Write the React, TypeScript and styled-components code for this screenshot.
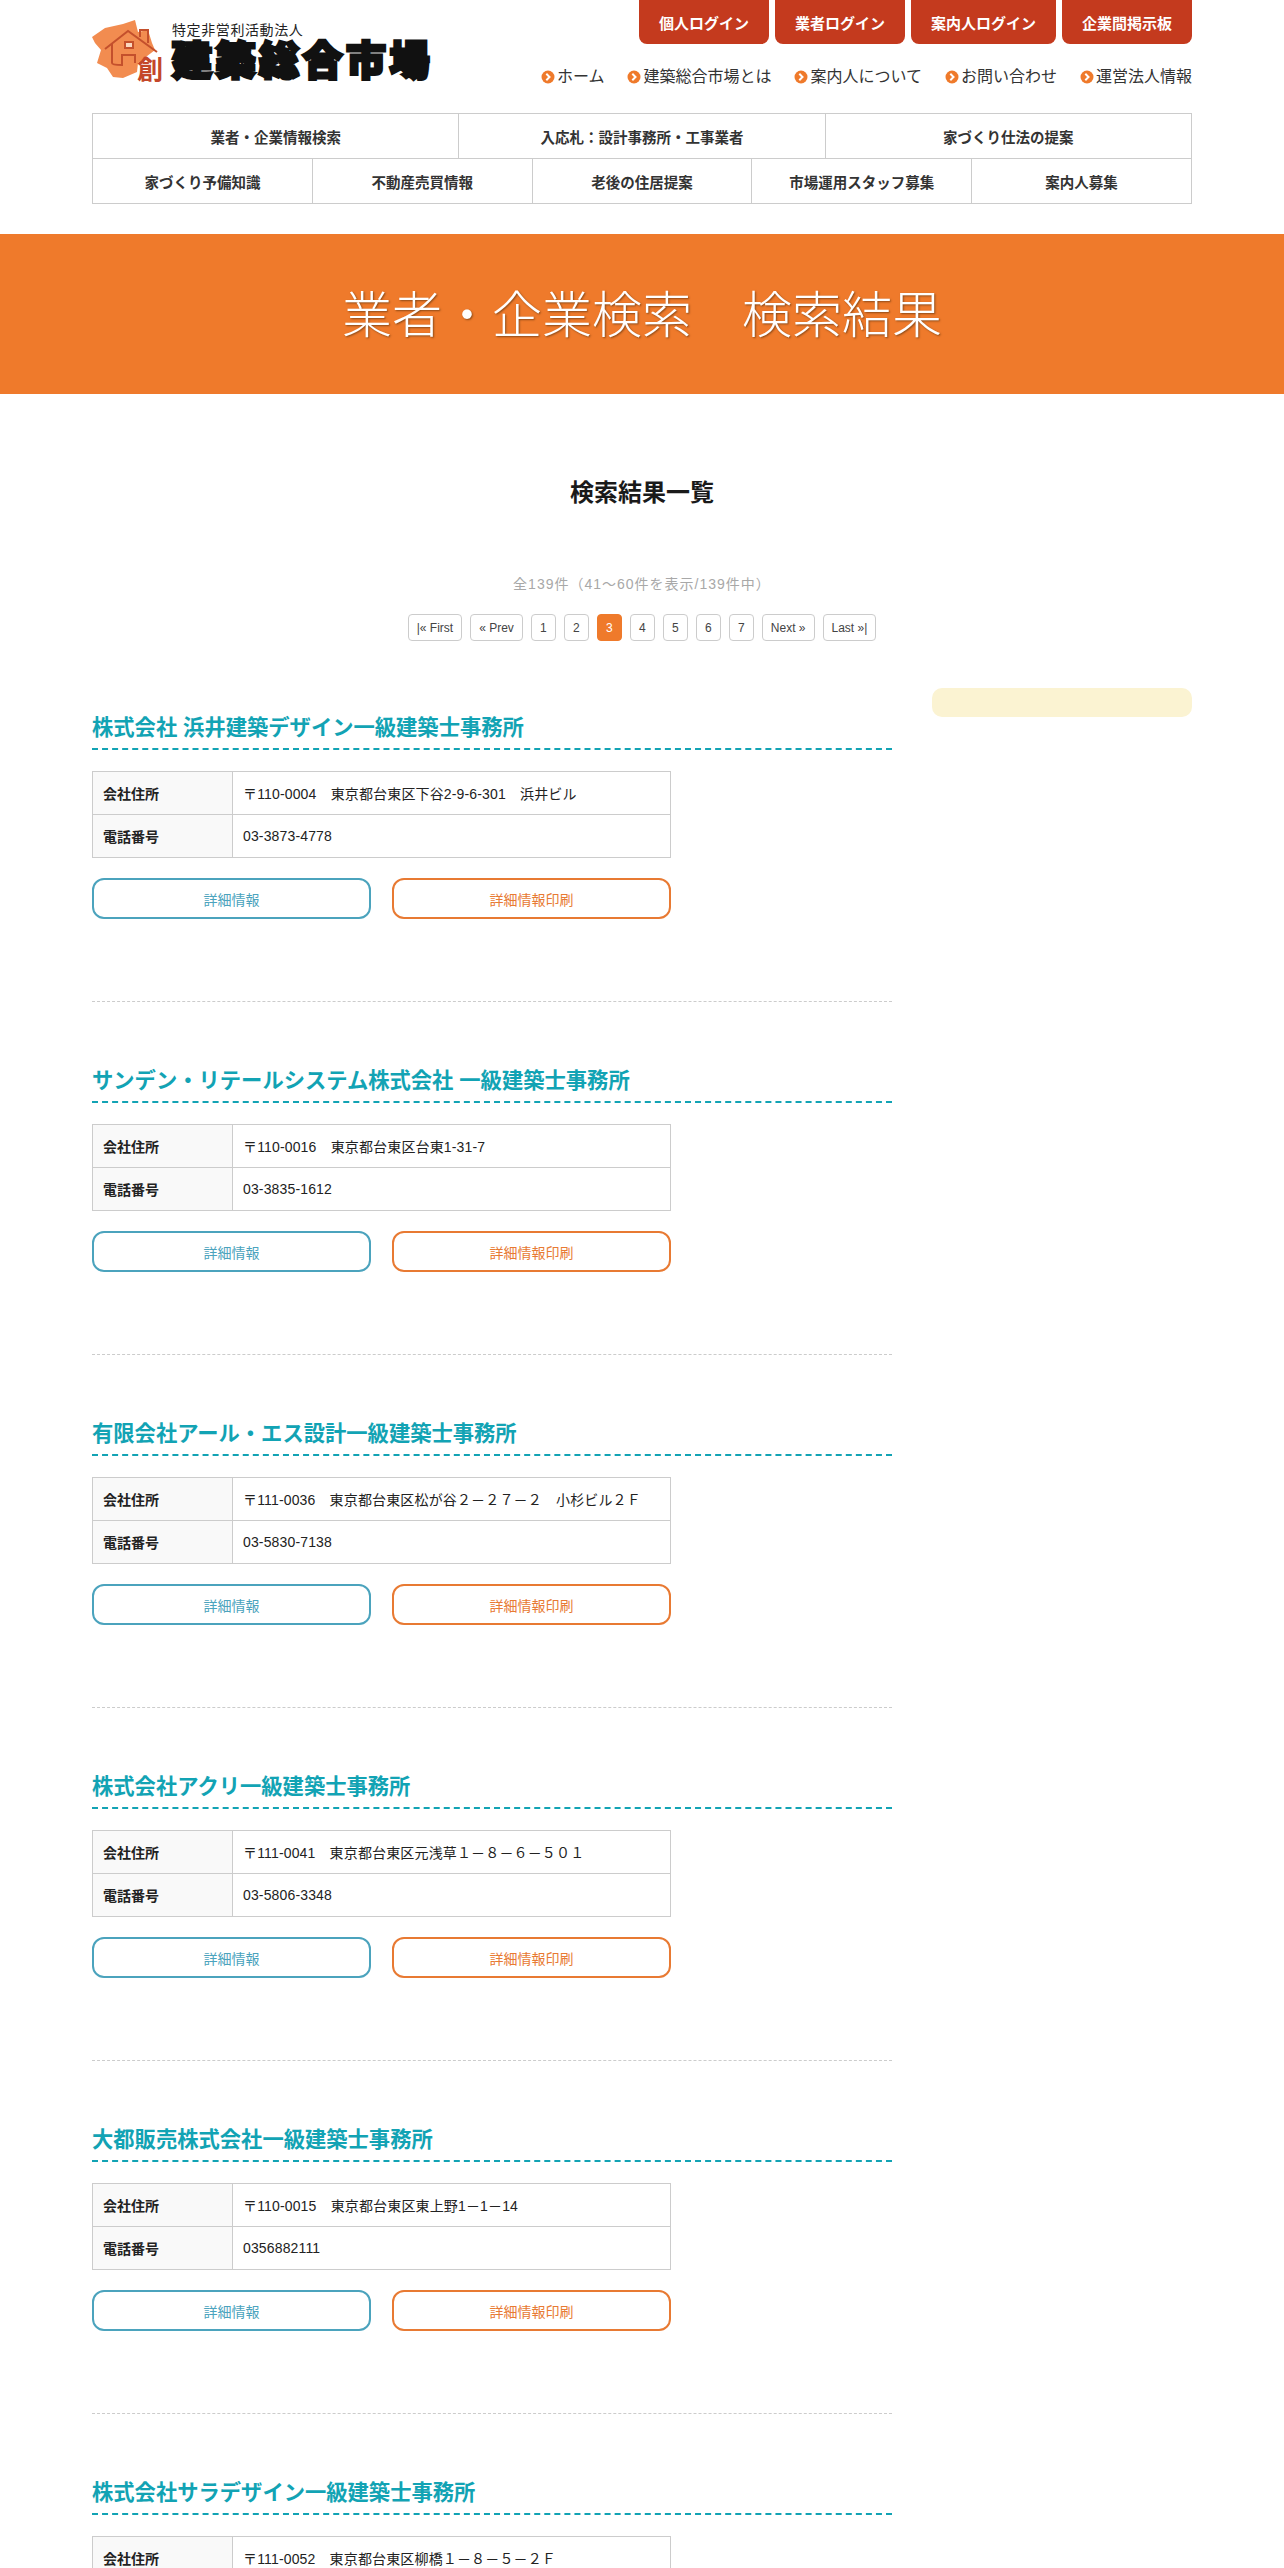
import React from "react";
import styled, { createGlobalStyle } from "styled-components";

const FONT = `"Liberation Sans", "Noto Sans CJK JP", sans-serif`;

const Global = createGlobalStyle`
  html, body { margin: 0; padding: 0; background: #fff; }
  body { height: 2568px; overflow: hidden; font-family: ${FONT}; color: #222; }
  * { box-sizing: border-box; }
`;

const Wrap = styled.div`
  width: 1100px;
  margin: 0 auto;
`;
const Header = styled.header`
  height: 113px;
  display: flex;
  justify-content: space-between;
`;
const LogoLink = styled.div`
  display: flex;
  align-items: flex-start;
  padding-top: 15px;
`;
const LogoText = styled.div`
  margin-top: 6px;
  display: flex;
  flex-direction: column;
`;
const LogoSub = styled.div`
  font-size: 14px;
  line-height: 16px;
  letter-spacing: 0.6px;
  color: #222;
  font-family: "Noto Sans CJK JP", sans-serif;
`;
const LogoMain = styled.div`
  font-family: "Noto Sans CJK JP", sans-serif;
  font-size: 40px;
  line-height: 42px;
  font-weight: 900;
  letter-spacing: 3.5px;
  color: #111;
  -webkit-text-stroke: 3px #111;
  white-space: nowrap;
`;
const HeadRight = styled.div`
  display: flex;
  flex-direction: column;
  align-items: flex-end;
`;
const Logins = styled.div`
  display: flex;
  gap: 6px;
`;
const LoginBtn = styled.a<{ $w: number }>`
  width: ${(p) => p.$w}px;
  height: 44px;
  background: #c43a1e;
  color: #fff;
  border-radius: 0 0 8px 8px;
  font-size: 15px;
  font-weight: 700;
  display: flex;
  align-items: center;
  justify-content: center;
`;
const SubNav = styled.nav`
  display: flex;
  gap: 23px;
  margin-top: 23px;
`;
const SubLink = styled.a`
  display: flex;
  align-items: center;
  font-size: 16px;
  line-height: 20px;
  color: #333;
  white-space: nowrap;
`;
const Bullet = styled.svg`
  width: 14px;
  height: 14px;
  margin-right: 2px;
  flex: none;
`;
const MainNav = styled.nav`
  border-top: 1px solid #ccc;
  border-left: 1px solid #ccc;
`;
const NavRow = styled.div<{ $n: number }>`
  display: grid;
  grid-template-columns: repeat(${(p) => p.$n}, 1fr);
`;
const NavCell = styled.a`
  height: 45px;
  border-right: 1px solid #ccc;
  border-bottom: 1px solid #ccc;
  display: flex;
  align-items: center;
  justify-content: center;
  font-size: 14.5px;
  font-weight: 700;
  color: #333;
`;
const Hero = styled.div`
  margin-top: 30px;
  height: 160px;
  padding-bottom: 6px;
  background: #ef7a2b;
  color: #fff;
  display: flex;
  align-items: center;
  justify-content: center;
  font-size: 50px;
  font-weight: 300;
  text-shadow: 1px 1px 2px rgba(70, 40, 10, 0.6);
  font-family: "Noto Sans CJK JP", sans-serif;
  white-space: pre;
`;
const PageTitle = styled.h2`
  margin: 81px 0 0;
  font-size: 24px;
  line-height: 36px;
  font-weight: 700;
  text-align: center;
  color: #1a1a1a;
`;
const Count = styled.p`
  margin: 61px 0 0;
  font-size: 14px;
  line-height: 24px;
  color: #a8a8a8;
  letter-spacing: 1px;
  text-align: center;
`;
const Pager = styled.div`
  margin-top: 18px;
  display: flex;
  justify-content: center;
  gap: 8px;
`;
const PageBtn = styled.a<{ $active?: boolean }>`
  height: 27px;
  min-width: 25px;
  padding: 0 8px;
  border: 1px solid ${(p) => (p.$active ? "#ef7a2b" : "#ccc")};
  background: ${(p) => (p.$active ? "#ef7a2b" : "#fff")};
  color: ${(p) => (p.$active ? "#fff" : "#444")};
  border-radius: 4px;
  font-size: 12px;
  display: flex;
  align-items: center;
  justify-content: center;
`;
const Columns = styled.div`
  margin-top: 47px;
  display: flex;
  justify-content: space-between;
  align-items: flex-start;
`;
const Results = styled.div`
  width: 800px;
`;
const Side = styled.aside`
  width: 260px;
  height: 29px;
  background: #fbf3d2;
  border-radius: 10px;
`;
const Item = styled.article`
  height: 314px;
  margin-bottom: 39px;
  padding-top: 22px;
  border-bottom: 1px dashed #ccc;
`;
const ItemTitle = styled.h3`
  margin: 0;
  height: 40px;
  border-bottom: 2px dashed #12a3b4;
  font-size: 21.3px;
  line-height: 37px;
  font-weight: 700;
  color: #12a3b4;
`;
const InfoTable = styled.table`
  margin-top: 21px;
  width: 579px;
  border-collapse: collapse;
  font-size: 14px;
`;
const Th = styled.th`
  width: 140px;
  height: 43px;
  padding: 0 10px;
  border: 1px solid #ccc;
  background: #f9f9f9;
  text-align: left;
  font-weight: 700;
  color: #222;
`;
const Td = styled.td`
  padding: 0 10px;
  border: 1px solid #ccc;
  color: #222;
  letter-spacing: 0.15px;
`;
const Actions = styled.div`
  margin-top: 20px;
  width: 579px;
  display: flex;
  gap: 21px;
`;
const ActionBtn = styled.a<{ $c: string }>`
  flex: 1;
  height: 41px;
  border: 2px solid ${(p) => p.$c};
  border-radius: 12px;
  color: ${(p) => p.$c};
  font-size: 14px;
  display: flex;
  align-items: center;
  justify-content: center;
`;
const LogoSvg = styled.svg`
  flex: none;
  overflow: visible;
`;

const logins = [
  ["個人ログイン", 130],
  ["業者ログイン", 130],
  ["案内人ログイン", 145],
  ["企業間掲示板", 130],
] as const;
const subs = ["ホーム", "建築総合市場とは", "案内人について", "お問い合わせ", "運営法人情報"];
const row1 = ["業者・企業情報検索", "入応札：設計事務所・工事業者", "家づくり仕法の提案"];
const row2 = ["家づくり予備知識", "不動産売買情報", "老後の住居提案", "市場運用スタッフ募集", "案内人募集"];
const pages = ["|« First", "« Prev", "1", "2", "3", "4", "5", "6", "7", "Next »", "Last »|"];
const items = [
  ["株式会社 浜井建築デザイン一級建築士事務所", "〒110-0004　東京都台東区下谷2-9-6-301　浜井ビル", "03-3873-4778"],
  ["サンデン・リテールシステム株式会社 一級建築士事務所", "〒110-0016　東京都台東区台東1-31-7", "03-3835-1612"],
  ["有限会社アール・エス設計一級建築士事務所", "〒111-0036　東京都台東区松が谷２－２７－２　小杉ビル２Ｆ", "03-5830-7138"],
  ["株式会社アクリ一級建築士事務所", "〒111-0041　東京都台東区元浅草１－８－６－５０１", "03-5806-3348"],
  ["大都販売株式会社一級建築士事務所", "〒110-0015　東京都台東区東上野1－1－14", "0356882111"],
  ["株式会社サラデザイン一級建築士事務所", "〒111-0052　東京都台東区柳橋１－８－５－２Ｆ", "03-5829-9070"],
];

const LogoMark = () => (
  <LogoSvg width="80" height="70" viewBox="0 0 80 70" aria-hidden="true">
    <path
      d="M0 22 L13 13 L31 9 L43 5 L46 17 L56 15 L60 28 L63 35 L46 48 L45 57 L31 63 L21 62 L15 53 L5 48 L9 35 L3 28 Z"
      fill="#f28c50"
    />
    <path d="M13 34 L36 16 L65 37" fill="none" stroke="#c4502c" strokeWidth="2" />
    <path d="M48 22 V15 H56 V28" fill="none" stroke="#c4502c" strokeWidth="2" />
    <path d="M20 28 V48 Q20 50 30 50 V40 H43 V48" fill="none" stroke="#c4502c" strokeWidth="2" />
    <rect x="33" y="27" width="8" height="6" fill="#fbd9c0" stroke="#c4502c" strokeWidth="2" />
    <text x="45" y="64" fontSize="26" fontWeight="700" fill="#c4472a" fontFamily="Noto Sans CJK JP">
      創
    </text>
  </LogoSvg>
);

const BulletIcon = () => (
  <Bullet viewBox="0 0 14 14" aria-hidden="true">
    <circle cx="7" cy="7" r="6.5" fill="#ef7a2b" />
    <path d="M5.3 3.8 L8.5 7 L5.3 10.2" fill="none" stroke="#fff" strokeWidth="2" />
  </Bullet>
);

export default function App() {
  return (
    <>
      <Global />
      <Wrap>
        <Header>
          <LogoLink>
            <LogoMark />
            <LogoText>
              <LogoSub>特定非営利活動法人</LogoSub>
              <LogoMain>建築総合市場</LogoMain>
            </LogoText>
          </LogoLink>
          <HeadRight>
            <Logins>
              {logins.map(([t, w]) => (
                <LoginBtn key={t} $w={w}>{t}</LoginBtn>
              ))}
            </Logins>
            <SubNav>
              {subs.map((s) => (
                <SubLink key={s}>
                  <BulletIcon />
                  {s}
                </SubLink>
              ))}
            </SubNav>
          </HeadRight>
        </Header>
        <MainNav>
          <NavRow $n={3}>
            {row1.map((t) => (
              <NavCell key={t}>{t}</NavCell>
            ))}
          </NavRow>
          <NavRow $n={5}>
            {row2.map((t) => (
              <NavCell key={t}>{t}</NavCell>
            ))}
          </NavRow>
        </MainNav>
      </Wrap>
      <Hero>{"業者・企業検索　検索結果"}</Hero>
      <Wrap>
        <PageTitle>検索結果一覧</PageTitle>
        <Count>全139件（41～60件を表示/139件中）</Count>
        <Pager>
          {pages.map((p) => (
            <PageBtn key={p} $active={p === "3"}>{p}</PageBtn>
          ))}
        </Pager>
        <Columns>
          <Results>
            {items.map(([name, addr, tel]) => (
              <Item key={name}>
                <ItemTitle>{name}</ItemTitle>
                <InfoTable>
                  <tbody>
                    <tr>
                      <Th>会社住所</Th>
                      <Td>{addr}</Td>
                    </tr>
                    <tr>
                      <Th>電話番号</Th>
                      <Td>{tel}</Td>
                    </tr>
                  </tbody>
                </InfoTable>
                <Actions>
                  <ActionBtn $c="#4ba3bd">詳細情報</ActionBtn>
                  <ActionBtn $c="#e87a33">詳細情報印刷</ActionBtn>
                </Actions>
              </Item>
            ))}
          </Results>
          <Side />
        </Columns>
      </Wrap>
    </>
  );
}
